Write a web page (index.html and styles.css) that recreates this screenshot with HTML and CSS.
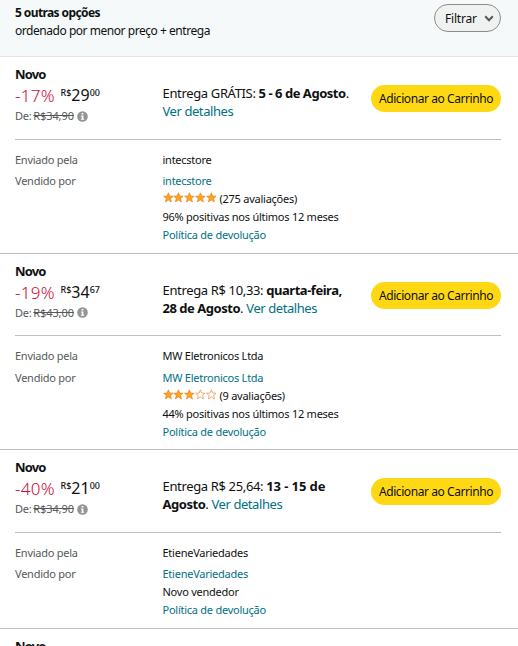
FILE: index.html
```
<!DOCTYPE html>
<html lang="pt-br">
<head>
    <meta charset="UTF-8">
    <title>Outras opções</title>
    <link rel="stylesheet" href="styles.css">
</head>
<body>
    <!-- Shared icons -->
    <svg class="sprite" width="0" height="0">
        <symbol id="star" viewBox="0 0 11 11">
            <path d="M5.5 .7 6.9 4 10.4 4.2 7.7 6.5 8.6 10 5.5 8.1 2.4 10 3.3 6.5 .6 4.2 4.1 4Z"/>
        </symbol>
        <symbol id="info" viewBox="0 0 11 11">
            <circle cx="5.5" cy="5.5" r="5.3" fill="#949494"/>
            <path d="M4.6 2h1.8v1.5H4.6zM3.9 4.5h2.5v3.3h.8v1H3.9v-1h.8V5.5h-.8z" fill="#fff"/>
        </symbol>
    </svg>

    <div class="header">
        <div class="header-text">
            <h1>5 outras opções</h1>
            <p>ordenado por menor preço + entrega</p>
        </div>
        <button class="filter">Filtrar
            <svg width="10" height="7" viewBox="0 0 10 7"><path d="M1.2 1.2 5 5.2 8.8 1.2" fill="none" stroke="#565959" stroke-width="2"/></svg>
        </button>
    </div>

    <div class="offer">
        <div class="offer-top">
            <div class="price-box">
                <h2>Novo</h2>
                <div class="price"><span class="discount">-17%</span><span class="symbol">R$</span><span class="whole">29</span><span class="cents">00</span></div>
                <div class="list-price">De: <s>R$34,90</s><svg class="info"><use href="#info"/></svg></div>
            </div>
            <div class="delivery">Entrega GRÁTIS: <b>5 - 6 de Agosto</b>.<br><a>Ver detalhes</a></div>
            <button class="add">Adicionar ao Carrinho</button>
        </div>
        <div class="seller">
            <div class="label">Enviado pela</div>
            <div>intecstore</div>
            <div class="label">Vendido por</div>
            <div>
                <a>intecstore</a>
                <div class="rating"><svg><use href="#star"/></svg><svg><use href="#star"/></svg><svg><use href="#star"/></svg><svg><use href="#star"/></svg><svg><use href="#star"/></svg><span>(275 avaliações)</span></div>
                <div>96% positivas nos últimos 12 meses</div>
                <a>Política de devolução</a>
            </div>
        </div>
    </div>

    <div class="offer">
        <div class="offer-top">
            <div class="price-box">
                <h2>Novo</h2>
                <div class="price"><span class="discount">-19%</span><span class="symbol">R$</span><span class="whole">34</span><span class="cents">67</span></div>
                <div class="list-price">De: <s>R$43,00</s><svg class="info"><use href="#info"/></svg></div>
            </div>
            <div class="delivery">Entrega R$ 10,33: <b>quarta-feira,<br>28 de Agosto</b>. <a>Ver detalhes</a></div>
            <button class="add">Adicionar ao Carrinho</button>
        </div>
        <div class="seller">
            <div class="label">Enviado pela</div>
            <div>MW Eletronicos Ltda</div>
            <div class="label">Vendido por</div>
            <div>
                <a>MW Eletronicos Ltda</a>
                <div class="rating"><svg><use href="#star"/></svg><svg><use href="#star"/></svg><svg><use href="#star"/></svg><svg class="empty"><use href="#star"/></svg><svg class="empty"><use href="#star"/></svg><span>(9 avaliações)</span></div>
                <div>44% positivas nos últimos 12 meses</div>
                <a>Política de devolução</a>
            </div>
        </div>
    </div>

    <div class="offer no-rating">
        <div class="offer-top">
            <div class="price-box">
                <h2>Novo</h2>
                <div class="price"><span class="discount">-40%</span><span class="symbol">R$</span><span class="whole">21</span><span class="cents">00</span></div>
                <div class="list-price">De: <s>R$34,90</s><svg class="info"><use href="#info"/></svg></div>
            </div>
            <div class="delivery">Entrega R$ 25,64: <b class="wide">13 - 15 de</b><br><b>Agosto</b>. <a>Ver detalhes</a></div>
            <button class="add">Adicionar ao Carrinho</button>
        </div>
        <div class="seller">
            <div class="label">Enviado pela</div>
            <div>EtieneVariedades</div>
            <div class="label">Vendido por</div>
            <div>
                <a>EtieneVariedades</a>
                <div>Novo vendedor</div>
                <a>Política de devolução</a>
            </div>
        </div>
    </div>

    <div class="offer next">
        <div class="offer-top">
            <h2>Novo</h2>
        </div>
    </div>
</body>
</html>
```
FILE: styles.css
```
* {
    box-sizing: border-box;
}

body {
    margin: 0;
    height: 646px;
    overflow: hidden;
    background: #fff;
    color: #0f1111;
    font-family: "Noto Sans", sans-serif;
    font-size: 11px;
    line-height: 18px;
    white-space: nowrap;
}

h1, h2, p {
    margin: 0;
}

a {
    display: block;
    color: #007185;
}

button {
    font-family: inherit;
    color: #0f1111;
    padding: 0;
    white-space: nowrap;
}

.sprite {
    position: absolute;
}

.header {
    display: flex;
    justify-content: space-between;
    height: 57.3px;
    padding: 4px 17px 0 15px;
    background: #f5f9fa;
    border-bottom: 1px solid #dbe8ea;
}

.header h1 {
    font-size: 12px;
    line-height: 18px;
    letter-spacing: -0.6px;
}

.header p {
    font-size: 12px;
    letter-spacing: -0.46px;
}

.filter {
    display: flex;
    align-items: center;
    justify-content: space-between;
    width: 67px;
    height: 28px;
    padding: 0 6px 0 10px;
    border: 1px solid #888c8c;
    border-radius: 14px;
    background: #f0f2f2;
    font-size: 12px;
    letter-spacing: -0.2px;
}

.offer {
    height: 196.4px;
    border-bottom: 1px solid #bbbfbf;
}

.offer.no-rating {
    height: 178.9px;
}

.offer.next {
    height: 17px;
    overflow: hidden;
    border: 0;
}

.offer-top {
    display: grid;
    grid-template-columns: 147.5px 1fr 130px;
    height: 82.7px;
    margin: 0 17px 0 15px;
    padding-top: 8px;
    border-bottom: 1px solid #bbbfbf;
}

.offer-top h2 {
    font-size: 13px;
    line-height: 18px;
    letter-spacing: -0.9px;
}

.price {
    display: flex;
    height: 24px;
    line-height: 25px;
}

.discount {
    width: 45.5px;
    color: #cc0c39;
    font-size: 17px;
    font-weight: 300;
    letter-spacing: 0.3px;
}

.symbol, .cents {
    font-size: 9px;
    font-weight: 500;
    line-height: 20px;
}

.whole {
    font-size: 16px;
}

.list-price {
    display: flex;
    align-items: center;
    color: #565959;
    font-size: 11px;
    letter-spacing: -0.3px;
}

.list-price s {
    margin: 0 3px 0 2px;
    letter-spacing: -0.1px;
}

.info {
    width: 11px;
    height: 11px;
}

.delivery {
    padding-top: 19px;
    font-size: 13px;
    letter-spacing: -0.35px;
}

.delivery b {
    letter-spacing: -0.47px;
}

.delivery .wide {
    letter-spacing: -0.1px;
}

.delivery a {
    display: inline;
    letter-spacing: -0.43px;
}

.add {
    height: 27px;
    margin-top: 20px;
    border: 0;
    border-radius: 14px;
    background: #ffd814;
    font-size: 12px;
    letter-spacing: -0.43px;
}

.seller {
    display: grid;
    grid-template-columns: 147.5px 1fr;
    row-gap: 3.4px;
    padding: 11px 15px 0;
    letter-spacing: -0.25px;
}

.label {
    color: #565959;
}

.rating {
    display: flex;
    height: 18px;
}

.rating svg {
    width: 10.8px;
    height: 11px;
    margin-top: 2px;
    fill: #ffa41c;
    stroke: #de7921;
    stroke-width: 0.6;
}

.rating .empty {
    fill: #fff;
}

.rating span {
    margin-left: 3px;
}
```
